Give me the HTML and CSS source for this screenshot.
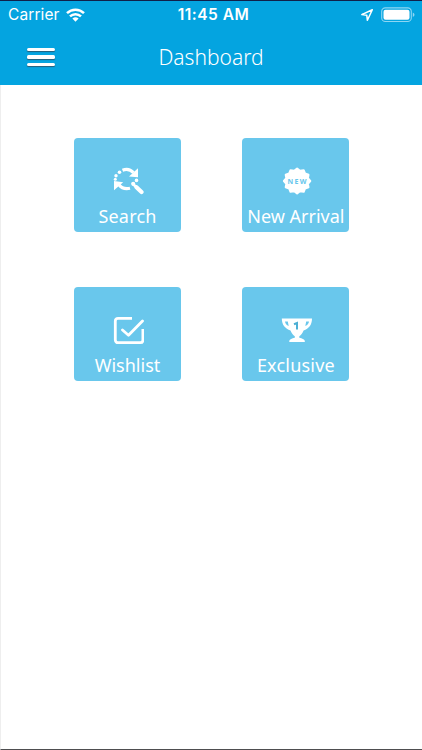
FILE: index.html
```html
<!DOCTYPE html>
<html lang="en">
<head>
    <meta charset="UTF-8">
    <meta name="viewport" content="width=device-width, initial-scale=1.0">
    <title>Dashboard</title>
    <link rel="stylesheet" href="styles.css">
</head>
<body>
    <header class="header">
        <div class="status-bar">
            <div class="status-left">
                <span class="carrier">Carrier</span>
                <svg width="19" height="14" viewBox="0 0 19 14">
                    <g fill="none" stroke="#fff" stroke-width="2.5">
                        <path d="M1 5.1a12.2 12.2 0 0 1 17 0"/>
                        <path d="M4 8.4a7.8 7.8 0 0 1 11 0"/>
                    </g>
                    <path fill="#fff" d="M6.4 10.6a4.5 4.5 0 0 1 6.2 0L9.5 13.7z"/>
                </svg>
            </div>
            <span class="clock">11:45 AM</span>
            <div class="status-right">
                <svg width="14" height="14" viewBox="0 0 14 14">
                    <path fill="none" stroke="#fff" stroke-width="1.5" stroke-linejoin="round" d="M12.3 1.7L1.8 6.6l5 .7.6 5z"/>
                </svg>
                <svg width="34" height="16" viewBox="0 0 34 16">
                    <rect x=".7" y=".9" width="29.6" height="13.6" rx="3.6" fill="none" stroke="#8fd6f3" stroke-width="1.1"/>
                    <rect x="2.5" y="2.7" width="26" height="10" rx="2" fill="#fff"/>
                    <path fill="#8fd6f3" d="M31.8 5.5q1.7.8 1.7 2.2t-1.7 2.2z"/>
                </svg>
            </div>
        </div>
        <div class="nav-bar">
            <button class="menu-button" aria-label="Menu">
                <span></span>
                <span></span>
                <span></span>
            </button>
            <h1>Dashboard</h1>
        </div>
    </header>

    <main class="content">
        <div class="grid">
            <a class="card" href="#">
                <svg class="card-icon" viewBox="0 0 32 30">
                    <g fill="none" stroke="#fff" stroke-width="3.2">
                        <path d="M10.5 4.3c4-1.6 8-.8 11 2.4"/>
                        <path d="M18 22.3c-4.5 1-8.5-.2-11-3.5"/>
                        <path stroke-width="4.2" stroke-linecap="round" d="M24.5 21.3l5 4.7"/>
                        <path stroke-width="2.8" d="M20.8 18l3.5 3"/>
                    </g>
                    <g fill="#fff">
                        <path d="M26 2.2v9l-9-.6z"/>
                        <path d="M2 24.3V15l9.2 1.2z"/>
                        <circle cx="7.5" cy="6.2" r="1.8"/>
                        <circle cx="4" cy="9.8" r="1.7"/>
                        <circle cx="3.3" cy="13.3" r="1.5"/>
                        <circle cx="24.5" cy="14.4" r="1.8"/>
                        <circle cx="21.2" cy="17.8" r="2.1"/>
                    </g>
                </svg>
                <span class="card-label search">Search</span>
            </a>

            <a class="card" href="#">
                <svg class="card-icon" viewBox="0 0 32 30">
                    <path transform="translate(17.1 15)" fill="#fff" stroke="#fff" stroke-width="2" stroke-linejoin="round" d="M13.2 0L10.8 2.8 11.4 6.25 7.9 7.6 6.6 10.8 2.9 10.3 0 12.5-2.9 10.3-6.6 10.8-7.9 7.6-11.4 6.25-10.8 2.8-13.2 0-10.8-2.8-11.4-6.25-7.9-7.6-6.6-10.8-2.9-10.3 0-12.5 2.9-10.3 6.6-10.8 7.9-7.6 11.4-6.25 10.8-2.8z"/>
                    <text class="badge-text" x="17.7" y="17.7">NEW</text>
                </svg>
                <span class="card-label">New Arrival</span>
            </a>

            <a class="card" href="#">
                <svg class="card-icon" viewBox="0 0 32 30">
                    <g fill="none" stroke="#fff" stroke-width="2.8" stroke-linecap="round" stroke-linejoin="round">
                        <path stroke-linecap="butt" d="M20 3.3H6A2.7 2.7 0 0 0 3.3 6v19A2.7 2.7 0 0 0 6 27.7h22.2a2.7 2.7 0 0 0 2.7-2.7V14"/>
                        <path d="M10.5 15l6 5.2L30.5 6"/>
                    </g>
                </svg>
                <span class="card-label">Wishlist</span>
            </a>

            <a class="card" href="#">
                <svg class="card-icon" viewBox="0 0 32 30">
                    <path fill="#fff" fill-rule="evenodd" d="M1.8 3.5h30.2c0 6.5-3.2 10-8.4 12-1.3 2.8-2.5 4.5-4.3 5.8v1.500c3 .7 5 1.800 5.500 3v1.200H9.300v-1.200c.5-1.200 2.500-2.300 5.500-3v-1.500c-1.800-1.300-3-3-4.300-5.800-5.200-2-8.700-5.500-8.700-12zM5 6.500c.3 2.200 1.500 3.700 3.700 4.500L7.800 6.500zM29 6.500h-2.800L25.300 11c2.200-.8 3.400-2.300 3.700-4.500z"/>
                    <path fill="none" stroke="#4dafd4" stroke-width="2" d="M14 9.2l3-1.200v6.500"/>
                </svg>
                <span class="card-label exclusive">Exclusive</span>
            </a>
        </div>
    </main>
</body>
</html>
```

FILE: styles.css
```css
:root {
    --bar-color: #04a4e0;
    --card-color: #69c7ec;
}

* {
    margin: 0;
    padding: 0;
    box-sizing: border-box;
}

body {
    display: flex;
    flex-direction: column;
    height: 750px;
    overflow: hidden;
    font-family: 'Noto Sans', sans-serif;
    color: #fff;
    background: #fff;
}

.header {
    flex: none;
    height: 85px;
    background: var(--bar-color);
    border-top: 1px solid #10204a;
}

.status-bar {
    display: grid;
    grid-template-columns: 1fr auto 1fr;
    align-items: center;
    height: 27px;
    padding: 0 7px 0 8px;
    font-family: Inter, sans-serif;
    font-size: 15.5px;
}

.status-left,
.status-right {
    display: flex;
    align-items: center;
    gap: 7px;
}

.status-left {
    gap: 6px;
}

.status-right {
    justify-content: flex-end;
}

.carrier {
    letter-spacing: 0.1px;
}

.clock {
    padding-left: 4px;
    font-weight: 600;
    letter-spacing: 0.5px;
}

.nav-bar {
    display: grid;
    grid-template-columns: 1fr auto 1fr;
    align-items: center;
    height: 57px;
    padding: 1px 27px 0;
}

.menu-button {
    display: flex;
    flex-direction: column;
    gap: 4px;
    width: 28px;
    border: 0;
    background: none;
}

.menu-button span {
    height: 3.6px;
    border-radius: 1.5px;
    background: #fff;
    box-shadow: 0 1px 1px #265f7a;
}

h1 {
    font-size: 21px;
    font-weight: 300;
    line-height: 28px;
}

.content {
    flex: 1;
    border-left: 1px solid #eee;
    border-bottom: 1px solid #4e4e50;
}

.grid {
    display: grid;
    grid-template-columns: 107px 107px;
    gap: 54.6px 61.4px;
    padding: 53px 0 0 73px;
}

.card {
    display: flex;
    flex-direction: column;
    align-items: center;
    height: 94px;
    padding-top: 28px;
    border-radius: 4px;
    background: var(--card-color);
    color: #fff;
    text-decoration: none;
}

.card-icon {
    width: 32px;
    height: 30px;
}

.card-label {
    margin-top: 8px;
    font-size: 18px;
    line-height: 24px;
    white-space: nowrap;
}

.search,
.exclusive {
    letter-spacing: 0.2px;
}

.badge-text {
    font: 700 7px 'Noto Sans', sans-serif;
    letter-spacing: 1.3px;
    text-anchor: middle;
    fill: var(--card-color);
}
```
